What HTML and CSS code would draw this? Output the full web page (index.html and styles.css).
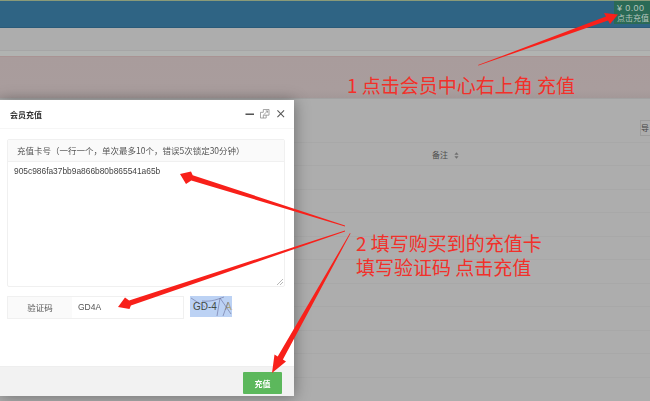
FILE: index.html
```html
<!DOCTYPE html>
<html lang="zh">
<head>
<meta charset="utf-8">
<title>会员充值</title>
<link rel="stylesheet" href="styles.css">
</head>
<body>
<div class="page">
  <header class="topbar">
    <div class="balance"><span class="amount">¥ 0.00</span><span>点击充值</span></div>
  </header>
  <div class="subnav"></div>
  <div class="gap"></div>
  <div class="notice"></div>
  <div class="content">
    <div class="toolbar"><span class="tool-btn">导</span></div>
    <div class="row head"><span class="sort">备注 <svg class="sort-icon" viewBox="0 0 6 8"><path d="M3 0 5.500 3H.5zM3 8 .5 5h5z"/></svg></span></div>
    <div class="row"></div><div class="row"></div><div class="row"></div><div class="row"></div><div class="row"></div>
    <div class="row"></div><div class="row"></div><div class="row"></div><div class="row"></div><div class="row"></div>
  </div>

  <section class="modal">
    <div class="modal-title">
      <strong>会员充值</strong>
      <div class="win-icons">
        <svg viewBox="0 0 10 10"><path d="M.5 5.500h9" stroke-width="1.600"/></svg>
        <svg class="restore" viewBox="0 0 10 10"><path d="M.5 3.500v6h6v-3M3.500 3.500V.5h6v6h-3M.5 3.500h3M6.500 6.500h-3v3M4 6l4-4M6 2h2v2" stroke-width=".8"/></svg>
        <svg viewBox="0 0 10 10"><path d="M1.500 1.500l7 7M8.500 1.500l-7 7" stroke-width="1.100"/></svg>
      </div>
    </div>
    <div class="modal-body">
      <div class="panel">
        <div class="panel-head">充值卡号（一行一个，单次最多10个，错误5次锁定30分钟）</div>
        <div class="panel-area">905c986fa37bb9a866b80b865541a65b
          <svg class="grip" viewBox="0 0 6 6"><path d="M6 0 0 6M6 3 3 6"/></svg>
        </div>
      </div>
      <div class="captcha-row">
        <div class="input-group">
          <span class="addon">验证码</span>
          <span class="code-input">GD4A</span>
        </div>
        <div class="captcha">
          <span>GD-4</span><span class="captcha-a">A</span>
          <svg viewBox="0 0 42 21"><path d="M1 2 15 11M12 5C22 6 28 3 34 1M27 20 30 2 41 18M33 20 38 6"/></svg>
        </div>
      </div>
    </div>
    <div class="modal-foot"><button class="submit" type="button">充值</button></div>
  </section>

  <p class="note note-one">1 点击会员中心右上角 充值</p>
  <p class="note note-two">2 填写购买到的充值卡<br>填写验证码 点击充值</p>

  <svg class="arrows" viewBox="0 0 650 401">
    <path d="M478 65 606 16.500 604 13 618 14.500 610 24 608 20.500 478.500 65.500z"/>
    <path d="M345 225.500 192.700 175.200 191 171.500 180 174 186 184 191.300 180.500 345 226.500z"/>
    <path d="M345 230.500 129.100 300.400 125 297.500 118 307 129.500 309 130.900 305.600 345 231.500z"/>
    <path d="M350 233 277.700 356.600 274.500 354.500 272 373 286 361.500 282.900 359.600 350.500 233.500z"/>
  </svg>
</div>
</body>
</html>
```
FILE: styles.css
```css
* { box-sizing: border-box; }
html, body { margin: 0; padding: 0; }
body { width: 650px; height: 401px; overflow: hidden; background: #adadad; font-family: "Noto Sans CJK SC", "Liberation Sans", sans-serif; }
.page { position: relative; width: 650px; height: 401px; overflow: hidden; filter: blur(.35px); }

.topbar { height: 28px; background: #2f6484; border-top: 1px solid #8a9a78; border-bottom: 1px solid #2b5b79; display: flex; justify-content: flex-end; align-items: flex-start; }
.balance { width: 36px; height: 23px; padding: 2px 0 0 3px; background: #2a6a56; color: #b5c5bd; font-size: 8px; line-height: 10px; white-space: nowrap; display: flex; flex-direction: column; }
.amount { font-family: "Liberation Sans", sans-serif; font-size: 9px; letter-spacing: .4px; }
.subnav { height: 23px; background: #adadad; border-bottom: 1px solid #a6a6a6; }
.gap { height: 5px; background: #b1b3b1; }
.notice { height: 43px; background: linear-gradient(#a99c9c, #a99d9d 80%, #a39898); border-top: 1px solid #a99393; border-bottom: 1px solid #a2a2a2; }

.content { background: #adadad; }
.toolbar { height: 37px; margin-bottom: 6px; display: flex; justify-content: flex-end; align-items: flex-end; }
.tool-btn { width: 10px; height: 16px; border: 1px solid #9c9c9c; border-right: 0; color: #444; font-size: 8px; line-height: 14px; overflow: hidden; }
.row { height: 23.500px; border-top: 1px solid #a8a8a8; }
.row.head { height: 23px; padding: 6px 0 0 432px; }
.sort { display: flex; align-items: center; gap: 6px; color: #4e4e4e; font-size: 8px; line-height: 12px; }
.sort-icon { width: 5px; height: 7px; fill: #6e6e6e; }

.modal { position: absolute; left: 0; top: 100px; width: 294px; height: 296px; background: #fff; box-shadow: 1px 1px 14px rgba(0, 0, 0, .35); display: flex; flex-direction: column; }
.modal-title { height: 29px; flex: none; padding: 0 9px 0 10px; display: flex; align-items: center; justify-content: space-between; border-bottom: 1px solid #f6f6f6; color: #333; font-size: 8px; }
.modal-title strong { font-weight: 700; }
.win-icons { display: flex; gap: 6px; }
.win-icons svg { width: 9.500px; height: 9.500px; fill: none; stroke: #555; }
.win-icons .restore { stroke: #888; }
.modal-body { flex: 1; padding: 10px 9px 0 7px; }
.panel { height: 148px; border: 1px solid #f0f0f0; border-radius: 2px; display: flex; flex-direction: column; }
.panel-head { height: 22px; flex: none; padding-left: 9px; background: #fafafa; border-bottom: 1px solid #f0f0f0; color: #555; font-size: 8.500px; line-height: 21px; white-space: nowrap; }
.panel-area { position: relative; flex: 1; padding: 3px 6px; color: #444; font-family: "Liberation Sans", sans-serif; font-size: 8.400px; line-height: 12px; }
.grip { position: absolute; right: 1px; bottom: 1px; width: 6px; height: 6px; stroke: #999; fill: none; stroke-width: .7; }
.captcha-row { margin-top: 9px; display: flex; align-items: flex-start; gap: 6px; }
.input-group { width: 177px; height: 23px; display: flex; border: 1px solid #f0f0f0; }
.addon { width: 64px; flex: none; background: #fafafa; color: #555; font-size: 8.500px; line-height: 21px; text-align: center; }
.code-input { flex: 1; padding-left: 6px; color: #555; font-family: "Liberation Sans", sans-serif; font-size: 8.500px; line-height: 21px; }
.captcha { position: relative; width: 42px; height: 21px; padding-left: 3px; background: #bcd2f4; color: #3f4a44; font-family: "Liberation Sans", sans-serif; font-size: 10px; line-height: 21px; white-space: nowrap; }
.captcha-a { margin-left: 8px; color: #a9a27c; }
.captcha svg { position: absolute; inset: 0; width: 42px; height: 21px; fill: none; stroke: #6a6f9a; stroke-width: .6; }
.modal-foot { height: 30px; flex: none; padding: 5px 12px 0 0; background: #f2f2f2; border-top: 1px solid #eee; display: flex; justify-content: flex-end; align-items: flex-start; }
.submit { width: 39px; height: 22px; padding: 0; border: 0; border-radius: 1px; background: #5cb85c; color: #fff; font-family: inherit; font-size: 8px; font-weight: 700; }

.note { position: absolute; margin: 0; color: #f2302a; font-size: 19px; line-height: 24px; white-space: nowrap; }
.note-one { left: 347px; top: 73px; }
.note-two { left: 356px; top: 231px; }
.arrows { position: absolute; inset: 0; width: 650px; height: 401px; fill: #f8201a; pointer-events: none; }
```
